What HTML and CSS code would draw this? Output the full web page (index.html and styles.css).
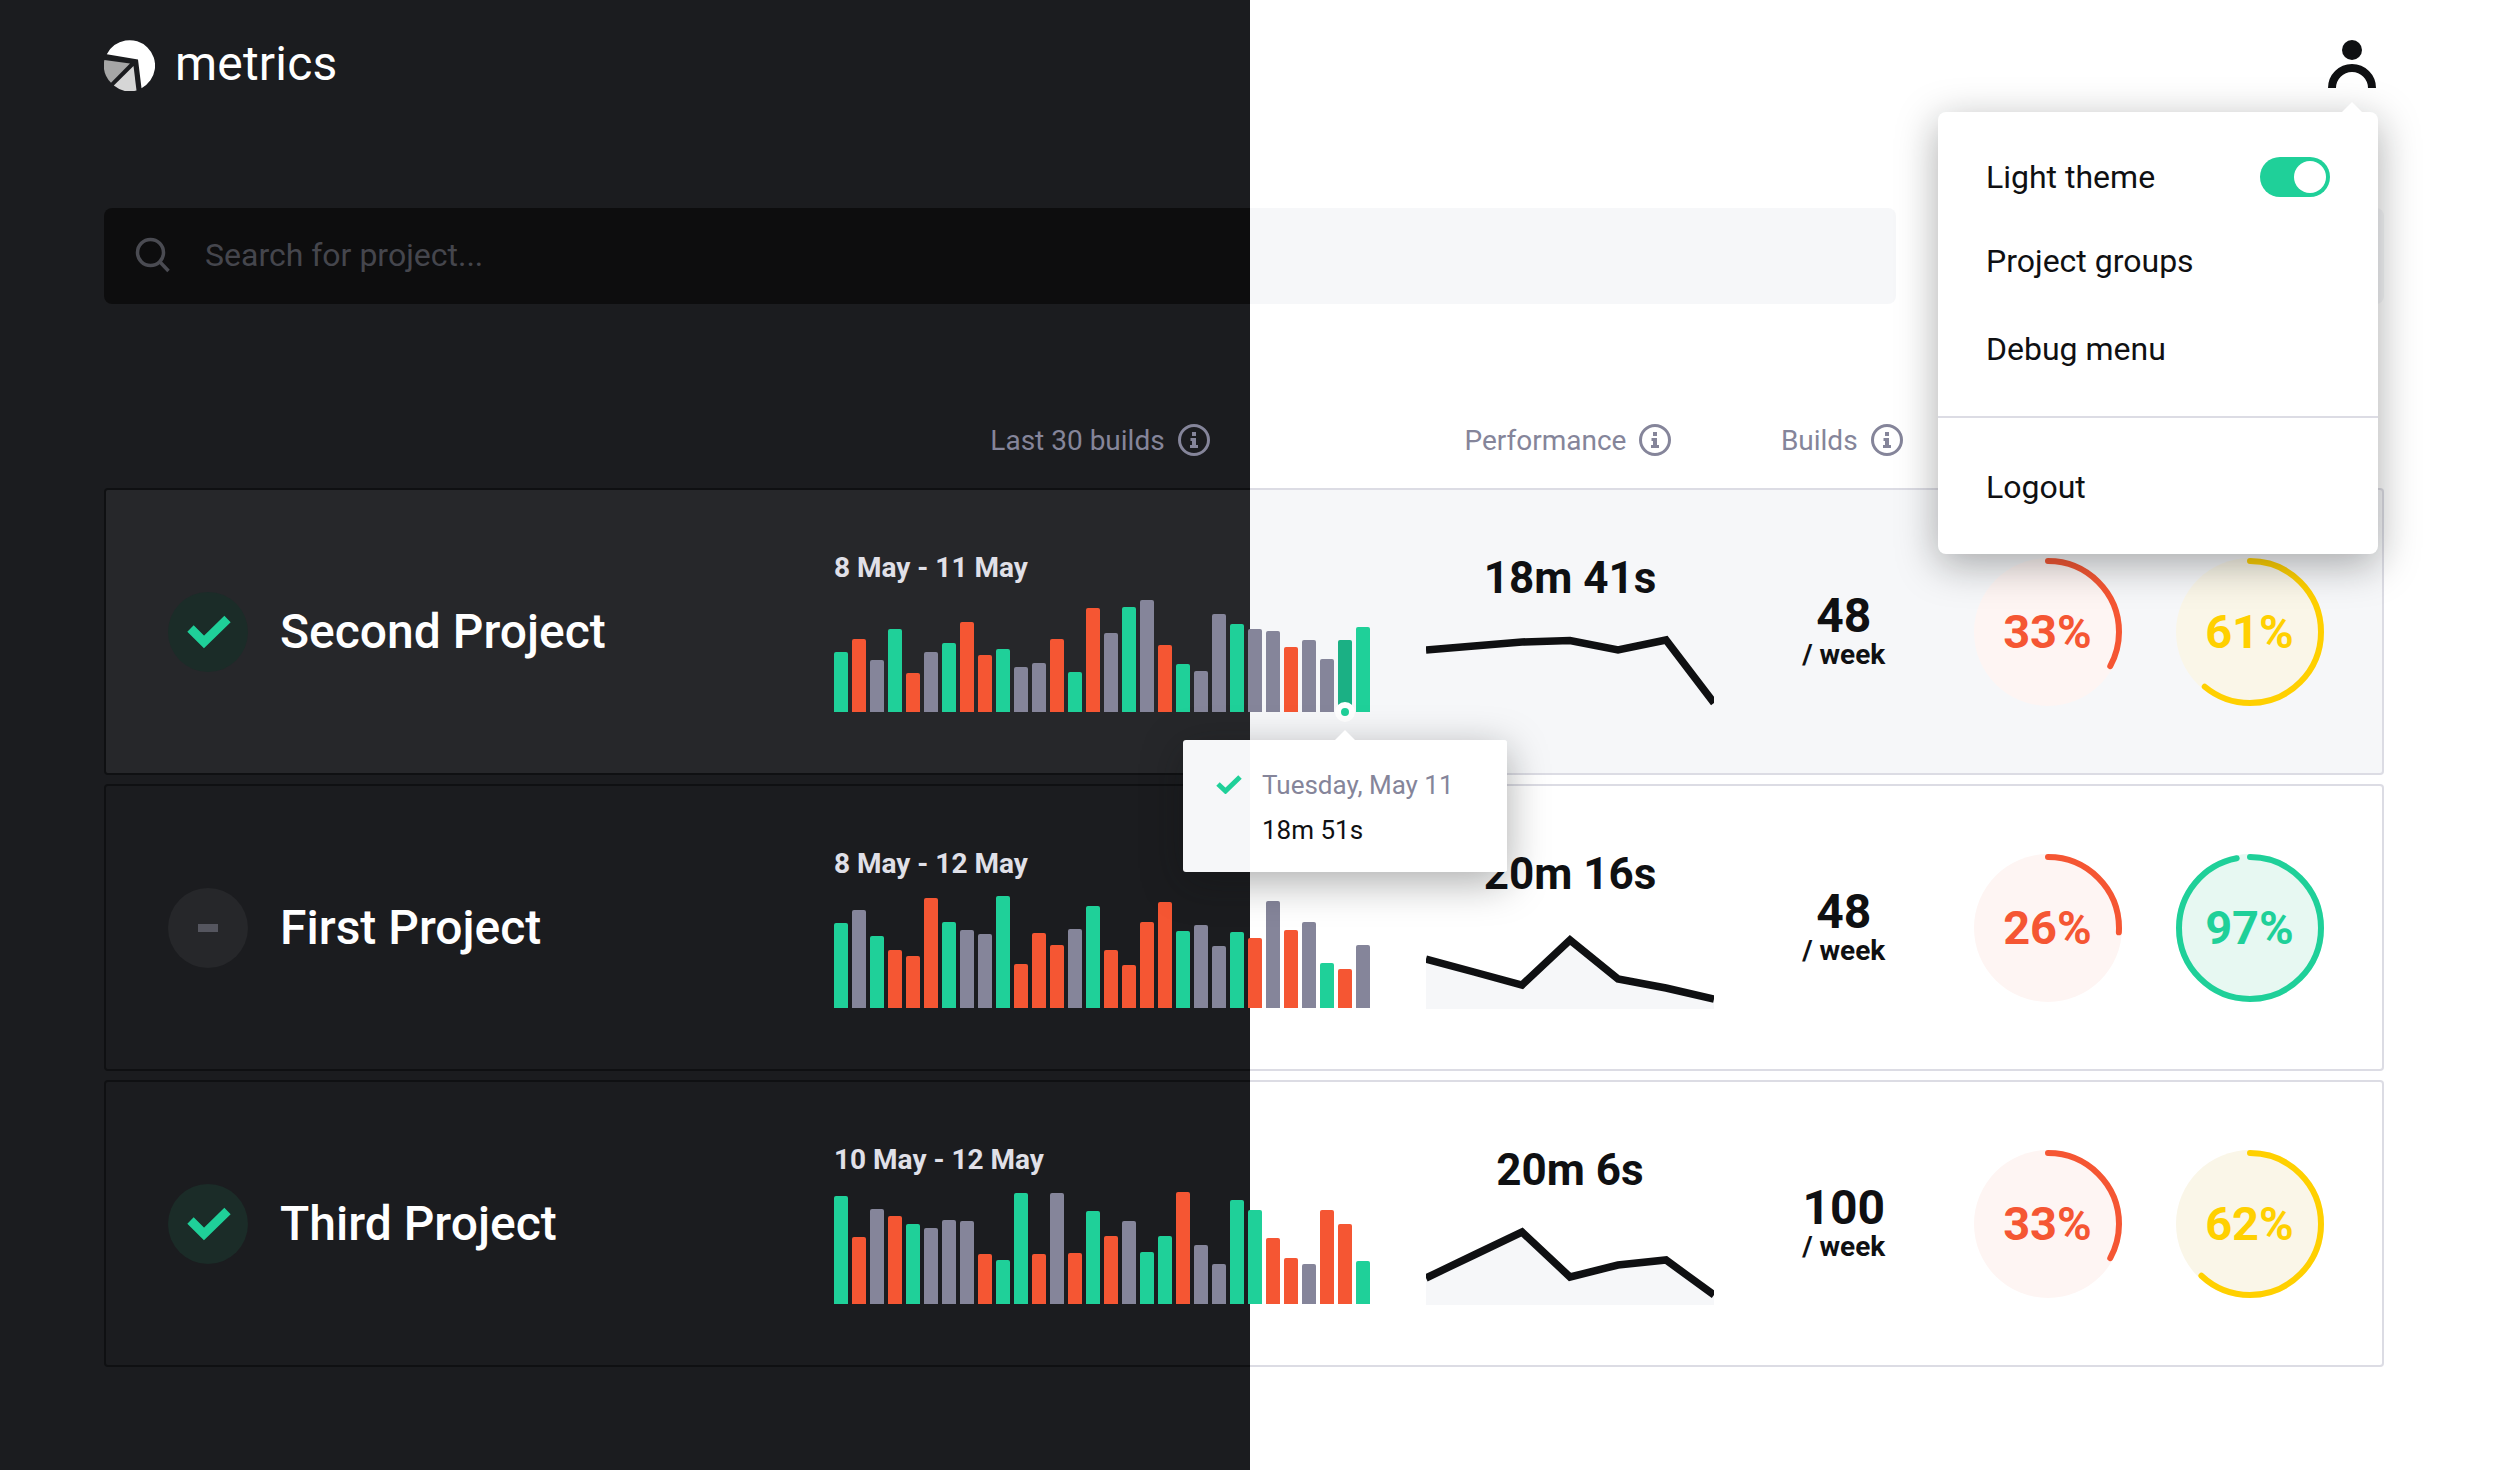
FILE: index.html
```html
<!DOCTYPE html>
<html>
	<head>
		<meta charset="UTF-8">
		<title>metrics</title>
		<link rel="stylesheet" href="styles.css">
	</head>
	<body>
		<div class="page">
			<header class="top">
				<div class="logo">
					<svg class="logo-mark" viewBox="0 0 51 51">
						<path fill="#fff" d="M2.8 14.2L34 19.5L37.5 48.2A25.5 25.5 0 1 0 2.8 14.2Z"/>
						<path fill="#a6a6a6" d="M.4 20L26 23.5L7 42.8A25.5 25.5 0 0 1 .4 20Z"/>
						<path fill="#d6d6d6" d="M29.5 26L32.5 50.5A25.5 25.5 0 0 1 9.8 45.6Z"/>
					</svg>
					<span class="logo-text">metrics</span>
				</div>
				<svg class="user" viewBox="0 0 48 48">
					<circle cx="24" cy="10" r="10" fill="#0f1012"/>
					<path fill="none" stroke="#0f1012" stroke-width="8" d="M4 48A20 20 0 0 1 44 48"/>
				</svg>
			</header>

			<div class="tools">
				<div class="search">
					<svg class="search-icon" viewBox="0 0 36 36">
						<circle cx="15.500" cy="15.500" r="13" fill="none" stroke="#4a4b52" stroke-width="3.500"/>
						<path stroke="#4a4b52" stroke-width="3.500" d="M25 25L33.500 34"/>
					</svg>
					<span class="placeholder">Search for project...</span>
				</div>
				<div class="filter"></div>
			</div>

			<div class="labels">
				<div></div>
				<div class="label">Last 30 builds
					<svg class="info" viewBox="0 0 32 32"><circle cx="16" cy="16" r="14.500"/><path d="M14 8h4v4h-4zM12.500 14h5.500v7h2v3h-8v-3h2v-4h-1.500z"/></svg>
				</div>
				<div class="label">Performance
					<svg class="info" viewBox="0 0 32 32"><circle cx="16" cy="16" r="14.500"/><path d="M14 8h4v4h-4zM12.500 14h5.500v7h2v3h-8v-3h2v-4h-1.500z"/></svg>
				</div>
				<div class="label">Builds
					<svg class="info" viewBox="0 0 32 32"><circle cx="16" cy="16" r="14.500"/><path d="M14 8h4v4h-4zM12.500 14h5.500v7h2v3h-8v-3h2v-4h-1.500z"/></svg>
				</div>
			</div>

			<div class="list">
				<!-- second project -->
				<div class="card card-active">
					<div class="name">
						<div class="status status-ok">
							<svg viewBox="0 0 80 80"><path d="M22.500 36.500L36 50L59.500 27"/></svg>
						</div>
						<span>Second Project</span>
					</div>
					<div class="chart">
						<div class="dates">8 May - 11 May</div>
						<div class="bars">
							<i class="g" style="height:60px"></i><i class="r" style="height:73px"></i><i class="n" style="height:52px"></i><i class="g" style="height:83px"></i><i class="r" style="height:39px"></i>
							<i class="n" style="height:60px"></i><i class="g" style="height:69px"></i><i class="r" style="height:90px"></i><i class="r" style="height:57px"></i><i class="g" style="height:63px"></i>
							<i class="n" style="height:45px"></i><i class="n" style="height:49px"></i><i class="r" style="height:73px"></i><i class="g" style="height:40px"></i><i class="r" style="height:104px"></i>
							<i class="n" style="height:79px"></i><i class="g" style="height:105px"></i><i class="n" style="height:112px"></i><i class="r" style="height:67px"></i><i class="g" style="height:48px"></i>
							<i class="n" style="height:41px"></i><i class="n" style="height:98px"></i><i class="g" style="height:88px"></i><i class="n" style="height:83px"></i><i class="n" style="height:81px"></i>
							<i class="r" style="height:65px"></i><i class="n" style="height:72px"></i><i class="n" style="height:53px"></i><i class="g hover" style="height:72px"></i><i class="g" style="height:85px"></i>
						</div>
					</div>
					<div class="perf">
						<div class="time">18m 41s</div>
						<svg class="spark" viewBox="0 0 288 100"><path class="spark-fill" d="M0 37L48 33L96 29L144 27.500L192 37L240 27L288 90V100H0Z"/><path class="spark-line" d="M0 37L48 33L96 29L144 27.500L192 37L240 27L288 90"/></svg>
					</div>
					<div class="builds"><b>48</b><span>/ week</span></div>
					<div class="rings">
						<div class="ring ring-red"><svg viewBox="0 0 148 148"><circle class="disc" cx="74" cy="74" r="74"/><circle class="arc" cx="74" cy="74" r="71" pathLength="100" stroke-dasharray="33 100"/></svg><span>33%</span></div>
						<div class="ring ring-yellow"><svg viewBox="0 0 148 148"><circle class="disc" cx="74" cy="74" r="74"/><circle class="arc" cx="74" cy="74" r="71" pathLength="100" stroke-dasharray="61 100"/></svg><span>61%</span></div>
					</div>
				</div>

				<!-- first project -->
				<div class="card">
					<div class="name">
						<div class="status status-none"><em></em></div>
						<span>First Project</span>
					</div>
					<div class="chart">
						<div class="dates">8 May - 12 May</div>
						<div class="bars">
							<i class="g" style="height:85px"></i><i class="n" style="height:98px"></i><i class="g" style="height:72px"></i><i class="r" style="height:58px"></i><i class="r" style="height:52px"></i>
							<i class="r" style="height:110px"></i><i class="g" style="height:86px"></i><i class="n" style="height:78px"></i><i class="n" style="height:74px"></i><i class="g" style="height:112px"></i>
							<i class="r" style="height:44px"></i><i class="r" style="height:75px"></i><i class="r" style="height:63px"></i><i class="n" style="height:79px"></i><i class="g" style="height:102px"></i>
							<i class="r" style="height:58px"></i><i class="r" style="height:43px"></i><i class="r" style="height:86px"></i><i class="r" style="height:106px"></i><i class="g" style="height:77px"></i>
							<i class="n" style="height:83px"></i><i class="n" style="height:62px"></i><i class="g" style="height:76px"></i><i class="r" style="height:70px"></i><i class="n" style="height:107px"></i>
							<i class="r" style="height:78px"></i><i class="n" style="height:86px"></i><i class="g" style="height:45px"></i><i class="r" style="height:39px"></i><i class="n" style="height:63px"></i>
						</div>
					</div>
					<div class="perf">
						<div class="time">20m 16s</div>
						<svg class="spark" viewBox="0 0 288 100"><path class="spark-fill" d="M0 50L48 63L96 76L144 31L192 70L240 79L288 90V100H0Z"/><path class="spark-line" d="M0 50L48 63L96 76L144 31L192 70L240 79L288 90"/></svg>
					</div>
					<div class="builds"><b>48</b><span>/ week</span></div>
					<div class="rings">
						<div class="ring ring-red"><svg viewBox="0 0 148 148"><circle class="disc" cx="74" cy="74" r="74"/><circle class="arc" cx="74" cy="74" r="71" pathLength="100" stroke-dasharray="26 100"/></svg><span>26%</span></div>
						<div class="ring ring-green"><svg viewBox="0 0 148 148"><circle class="disc" cx="74" cy="74" r="74"/><circle class="arc" cx="74" cy="74" r="71" pathLength="100" stroke-dasharray="97 100"/></svg><span>97%</span></div>
					</div>
				</div>

				<!-- third project -->
				<div class="card">
					<div class="name">
						<div class="status status-ok">
							<svg viewBox="0 0 80 80"><path d="M22.500 36.500L36 50L59.500 27"/></svg>
						</div>
						<span>Third Project</span>
					</div>
					<div class="chart">
						<div class="dates">10 May - 12 May</div>
						<div class="bars">
							<i class="g" style="height:108px"></i><i class="r" style="height:67px"></i><i class="n" style="height:95px"></i><i class="r" style="height:88px"></i><i class="g" style="height:80px"></i>
							<i class="n" style="height:76px"></i><i class="n" style="height:84px"></i><i class="n" style="height:83px"></i><i class="r" style="height:50px"></i><i class="g" style="height:44px"></i>
							<i class="g" style="height:111px"></i><i class="r" style="height:50px"></i><i class="n" style="height:111px"></i><i class="r" style="height:51px"></i><i class="g" style="height:93px"></i>
							<i class="r" style="height:68px"></i><i class="n" style="height:83px"></i><i class="g" style="height:52px"></i><i class="g" style="height:68px"></i><i class="r" style="height:112px"></i>
							<i class="n" style="height:59px"></i><i class="n" style="height:40px"></i><i class="g" style="height:104px"></i><i class="g" style="height:94px"></i><i class="r" style="height:66px"></i>
							<i class="r" style="height:46px"></i><i class="n" style="height:40px"></i><i class="r" style="height:94px"></i><i class="r" style="height:80px"></i><i class="g" style="height:43px"></i>
						</div>
					</div>
					<div class="perf">
						<div class="time">20m 6s</div>
						<svg class="spark" viewBox="0 0 288 100"><path class="spark-fill" d="M0 73L48 50L96 27L144 72L192 60L240 55L288 90V100H0Z"/><path class="spark-line" d="M0 73L48 50L96 27L144 72L192 60L240 55L288 90"/></svg>
					</div>
					<div class="builds"><b>100</b><span>/ week</span></div>
					<div class="rings">
						<div class="ring ring-red"><svg viewBox="0 0 148 148"><circle class="disc" cx="74" cy="74" r="74"/><circle class="arc" cx="74" cy="74" r="71" pathLength="100" stroke-dasharray="33 100"/></svg><span>33%</span></div>
						<div class="ring ring-yellow"><svg viewBox="0 0 148 148"><circle class="disc" cx="74" cy="74" r="74"/><circle class="arc" cx="74" cy="74" r="71" pathLength="100" stroke-dasharray="62 100"/></svg><span>62%</span></div>
					</div>
				</div>
			</div>

			<!-- tooltip of the hovered bar -->
			<div class="tooltip">
				<svg class="tooltip-check" viewBox="0 0 26 20"><path d="M2 10L9.500 17L24 3"/></svg>
				<div>
					<div class="tooltip-date">Tuesday, May 11</div>
					<div class="tooltip-time">18m 51s</div>
				</div>
			</div>

			<!-- user menu -->
			<div class="menu">
				<div class="menu-item menu-toggle">Light theme <span class="toggle"></span></div>
				<div class="menu-item menu-groups">Project groups</div>
				<div class="menu-item menu-debug">Debug menu</div>
				<div class="menu-line"></div>
				<div class="menu-item">Logout</div>
			</div>
		</div>
	</body>
</html>
```

FILE: styles.css
```css
*{
	padding: 0;
	margin: 0;
	box-sizing: border-box;
}
body{
	font-family: Roboto, "Liberation Sans", sans-serif;
}
.page{
	position: relative;
	width: 2500px;
	height: 1470px;
	padding: 40px 116px 0 104px;
	overflow: hidden;
	background: linear-gradient(90deg, #1b1c1f 1250px, #fff 1250px);
}

/* top bar */
.top{
	display: flex;
	justify-content: space-between;
	height: 51px;
}
.logo{
	display: flex;
	align-items: center;
	gap: 20px;
}
.logo-mark{
	width: 51px;
	height: 51px;
}
.logo-text{
	padding-bottom: 4px;
	font-size: 48px;
	line-height: 56px;
	letter-spacing: .2px;
	color: #fff;
}
.user{
	width: 48px;
	height: 48px;
	margin-right: 8px;
}

/* search */
.tools{
	display: flex;
	justify-content: space-between;
	margin-top: 117px;
}
.search{
	display: flex;
	align-items: center;
	width: 1792px;
	height: 96px;
	padding: 0 0 2px 31px;
	border-radius: 8px;
	background: linear-gradient(90deg, #0d0d0e 1250px, #f6f7f9 1250px) fixed;
}
.search-icon{
	width: 36px;
	height: 36px;
	margin-right: 34px;
}
.placeholder{
	font-size: 32px;
	color: #45464d;
}
.filter{
	width: 430px;
	height: 96px;
	border-radius: 8px;
	background: #f6f7f9;
}

/* table */
.labels,
.card{
	display: grid;
	grid-template-columns: 672px 536px 288px 147.5px auto;
	column-gap: 56px;
}
.labels{
	height: 48px;
	margin-top: 112px;
	padding: 0 2px;
}
.label{
	display: flex;
	justify-content: center;
	align-items: center;
	gap: 13px;
	padding-right: 4px;
	font-size: 28px;
	color: #85859a;
	white-space: nowrap;
}
.info{
	flex: none;
	width: 32px;
	height: 32px;
}
.info circle{
	fill: none;
	stroke: #85859a;
	stroke-width: 3;
}
.info path{
	fill: #85859a;
}
.list{
	display: flex;
	flex-direction: column;
	gap: 9px;
	margin-top: 24px;
}
.card{
	height: 287px;
	border: 2px solid transparent;
	border-radius: 4px;
	background: linear-gradient(90deg, #1b1c1f 1250px, #fff 1250px) fixed padding-box, linear-gradient(90deg, #0f1012 1250px, #dcdce4 1250px) fixed border-box;
}
.card-active{
	background: linear-gradient(90deg, #26272a 1250px, #f6f7f9 1250px) fixed padding-box, linear-gradient(90deg, #0f1012 1250px, #dcdce4 1250px) fixed border-box;
}

/* project name */
.name{
	display: flex;
	align-items: center;
	gap: 32px;
	padding-left: 62px;
	font-size: 48px;
	font-weight: 500;
	color: #fff;
}
.status{
	display: flex;
	align-items: center;
	justify-content: center;
	width: 80px;
	height: 80px;
	border-radius: 50%;
}
.status-ok{
	background: #1b2c28;
}
.status-ok svg{
	width: 80px;
	height: 80px;
}
.status-ok path{
	fill: none;
	stroke: #1fd099;
	stroke-width: 9;
}
.status-none{
	background: #26272a;
}
.status-none em{
	width: 20px;
	height: 8px;
	background: #55565f;
}

/* bars */
.chart{
	padding-top: 58px;
}
.dates{
	font-size: 28px;
	line-height: 40px;
	font-weight: 700;
	color: #e0e0e8;
}
.bars{
	display: flex;
	align-items: flex-end;
	gap: 4px;
	height: 112px;
	margin-top: 12px;
}
.bars i{
	position: relative;
	width: 14px;
	border-radius: 2px 2px 0 0;
}
.g{
	background: #1fd099;
}
.r{
	background: #f55633;
}
.n{
	background: #85859a;
}
.bars .hover{
	background: #1bb084;
}
.hover::after{
	content: "";
	position: absolute;
	left: -3px;
	bottom: -10px;
	box-sizing: border-box;
	width: 20px;
	height: 20px;
	border: 6px solid #fff;
	border-radius: 50%;
	background: #1fd099;
}

/* performance */
.perf{
	padding-top: 62px;
}
.time{
	font-size: 44px;
	line-height: 52px;
	font-weight: 700;
	text-align: center;
	color: #0f1012;
}
.spark{
	display: block;
	width: 288px;
	height: 100px;
	margin-top: 9px;
}
.spark-fill{
	fill: #f6f7f9;
}
.spark-line{
	fill: none;
	stroke: #0f1012;
	stroke-width: 7.500;
}

/* builds */
.builds{
	display: flex;
	flex-direction: column;
	align-items: center;
	justify-content: center;
	color: #0f1012;
}
.builds b{
	font-size: 48px;
	line-height: 46px;
	font-weight: 700;
}
.builds span{
	font-size: 28px;
	line-height: 32px;
	font-weight: 700;
}

/* rings */
.rings{
	display: flex;
	align-items: center;
	gap: 54px;
}
.ring{
	display: grid;
	place-items: center;
	width: 148px;
	height: 148px;
}
.ring svg,
.ring span{
	grid-area: 1 / 1;
}
.ring svg{
	width: 148px;
	height: 148px;
}
.ring span{
	font-size: 47px;
	font-weight: 700;
}
.arc{
	fill: none;
	stroke-width: 6;
	stroke-linecap: round;
	transform: rotate(-90deg);
	transform-origin: 74px 74px;
}
.ring-red .disc{
	fill: #fef5f3;
}
.ring-red .arc{
	stroke: #f55633;
}
.ring-red span{
	color: #f55633;
}
.ring-yellow .disc{
	fill: #faf6e8;
}
.ring-yellow .arc{
	stroke: #ffd000;
}
.ring-yellow span{
	color: #ffd000;
}
.ring-green .disc{
	fill: #e7f8f2;
}
.ring-green .arc{
	stroke: #1fd099;
}
.ring-green span{
	color: #1fd099;
}

/* tooltip */
.tooltip{
	position: absolute;
	top: 740px;
	left: 1183px;
	display: flex;
	width: 324px;
	height: 132px;
	padding: 26px 0 0 33px;
	border-radius: 3px;
	background: linear-gradient(90deg, #f6f7f9 1250px, #fff 1250px) fixed;
	box-shadow: 0 10px 40px rgba(15, 16, 18, .35);
}
.tooltip::before{
	content: "";
	position: absolute;
	top: -10px;
	left: 152px;
	border: 10px solid transparent;
	border-top: 0;
	border-bottom-color: #fff;
}
.tooltip-check{
	flex: none;
	width: 26px;
	height: 20px;
	margin: 8px 20px 0 0;
}
.tooltip-check path{
	fill: none;
	stroke: #1fd099;
	stroke-width: 5;
}
.tooltip-date{
	font-size: 26px;
	line-height: 38px;
	color: #85859a;
}
.tooltip-time{
	margin-top: 7px;
	font-size: 26px;
	line-height: 38px;
	color: #0f1012;
}

/* menu */
.menu{
	position: absolute;
	top: 112px;
	left: 1938px;
	width: 440px;
	height: 442px;
	padding-top: 45px;
	border-radius: 8px;
	background: #fff;
	box-shadow: 0 10px 40px rgba(15, 16, 18, .35);
}
.menu::before{
	content: "";
	position: absolute;
	top: -10px;
	left: 404px;
	border: 10px solid transparent;
	border-top: 0;
	border-bottom-color: #fff;
}
.menu-item{
	padding: 0 48px;
	font-size: 32px;
	line-height: 40px;
	color: #0f1012;
}
.menu-toggle{
	display: flex;
	justify-content: space-between;
	align-items: center;
}
.menu-groups{
	margin-top: 44px;
}
.menu-debug{
	margin-top: 48px;
}
.menu-line{
	height: 2px;
	margin: 47px 0 49px;
	background: #dcdce4;
}
.toggle{
	position: relative;
	width: 70px;
	height: 40px;
	margin-top: -1px;
	border-radius: 20px;
	background: #1fd099;
}
.toggle::after{
	content: "";
	position: absolute;
	top: 4px;
	right: 4px;
	width: 32px;
	height: 32px;
	border-radius: 50%;
	background: #fff;
}
```
